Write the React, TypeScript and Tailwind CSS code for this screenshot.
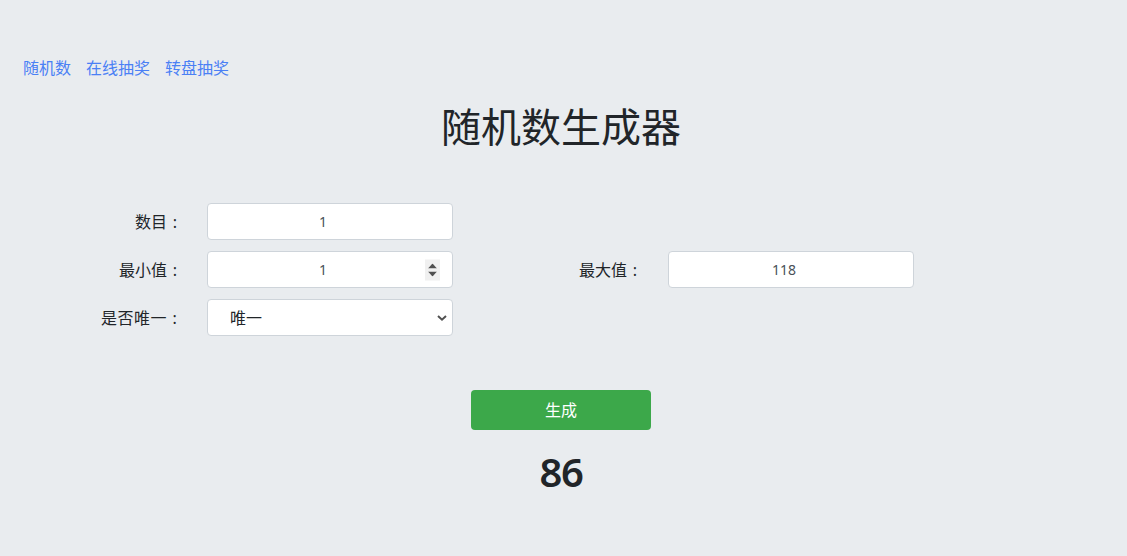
import React from "react";

const font = { fontFamily: '"Noto Sans", "Noto Sans CJK SC", sans-serif' };

function Label({ text, className = "" }: { text: string; className?: string }) {
  return (
    <div className={`text-right text-[16px] leading-[24px] text-[#212529] ${className}`}>
      {text}
      <span className="inline-block w-[16px] text-center">:</span>
    </div>
  );
}

function Spinner() {
  return (
    <div className="pointer-events-none absolute right-[13px] top-1/2 flex h-[21px] w-[15px] -translate-y-1/2 flex-col items-center justify-center gap-[3px] bg-[#f0f0f0]">
      <svg width="9" height="5" viewBox="0 0 9 5">
        <path d="M0 5 L4.5 0 L9 5 Z" fill="#505050" />
      </svg>
      <svg width="9" height="5" viewBox="0 0 9 5">
        <path d="M0 0 L4.5 5 L9 0 Z" fill="#505050" />
      </svg>
    </div>
  );
}

const inputCls =
  "h-[37px] w-[246px] rounded-[4px] border border-[#ced4da] bg-white pr-[14px] text-center text-[14px] text-[#495057] outline-none";

export default function App() {
  return (
    <div className="min-h-[556px] bg-[#e9ecef] pb-[60px] pr-[5px]" style={font}>
      <nav className="flex gap-[15px] px-[23px] pt-[56px] text-[16px] leading-[24px] text-[#4a80f5]">
        <a href="#">随机数</a>
        <a href="#">在线抽奖</a>
        <a href="#">转盘抽奖</a>
      </nav>

      <h1 className="mt-[23px] text-center text-[40px] font-normal leading-[48px] text-[#212529]">
        随机数生成器
      </h1>

      <div className="mt-[52px] flex flex-col gap-[11px]">
        <div className="flex items-center">
          <Label text="数目" className="w-[183px]" />
          <input readOnly value="1" className={`ml-[24px] ${inputCls}`} />
        </div>
        <div className="flex items-center">
          <Label text="最小值" className="w-[183px]" />
          <div className="relative ml-[24px]">
            <input readOnly value="1" className={inputCls} />
            <Spinner />
          </div>
          <Label text="最大值" className="w-[190px]" />
          <input readOnly value="118" className={`ml-[25px] ${inputCls}`} />
        </div>
        <div className="flex items-center">
          <Label text="是否唯一" className="w-[183px] tracking-[0.5px]" />
          <div className="relative ml-[24px]">
            <select
              defaultValue="1"
              className="h-[37px] w-[246px] appearance-none rounded-[4px] border border-[#ced4da] bg-white pl-[22px] text-[16px] text-[#212529] outline-none"
            >
              <option value="1">唯一</option>
              <option value="0">不唯一</option>
            </select>
            <svg
              className="pointer-events-none absolute right-[6px] top-1/2 -translate-y-1/2"
              width="10"
              height="7"
              viewBox="0 0 10 7"
            >
              <path d="M1 1.5 L5 5.2 L9 1.5" fill="none" stroke="#505050" strokeWidth="2" />
            </svg>
          </div>
        </div>
      </div>

      <div className="mt-[54px] flex justify-center">
        <button className="h-[40px] w-[180px] rounded-[4px] bg-[#3ca84a] text-[16px] text-white">生成</button>
      </div>

      <div className="mt-[18px] text-center text-[40px] font-semibold leading-[48px] tracking-[-1.5px] text-[#212529]">
        86
      </div>
    </div>
  );
}
